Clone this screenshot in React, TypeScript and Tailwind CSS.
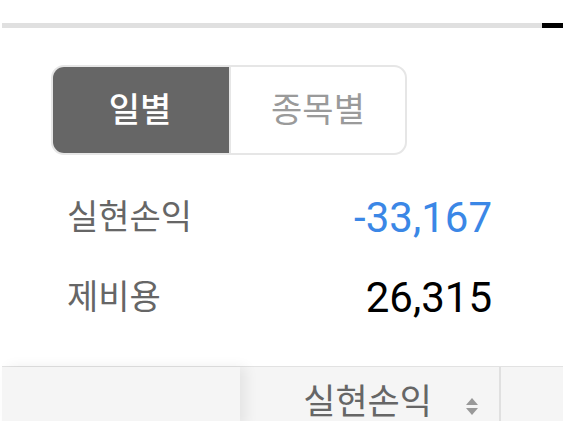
import { useState } from 'react';

const font = { fontFamily: "Roboto, 'Noto Sans CJK KR', sans-serif" };

function SortIcon() {
  return (
    <svg width="14" height="19" viewBox="0 0 14 19" className="text-[#999999]">
      <path d="M7 1 L13 8 H1 Z" fill="currentColor" />
      <path d="M7 18 L13 11 H1 Z" fill="currentColor" />
    </svg>
  );
}

export default function App() {
  const [tab, setTab] = useState<'day' | 'item'>('day');

  const rows = [
    { label: '실현손익', value: '-33,167', color: 'text-[#3b87e6]' },
    { label: '제비용', value: '26,315', color: 'text-black' },
  ];

  return (
    <div className="w-[563px] h-[421px] overflow-hidden bg-white" style={font}>
      {/* Top tab indicator */}
      <div className="pt-[23px] pl-[2px] flex">
        <div className="h-[5px] flex-1 bg-[#e0e0e0]" />
        <div className="h-[5px] w-[21px] bg-black" />
      </div>

      {/* Segmented toggle */}
      <div className="pl-[51px] pt-[37px]">
        <div className="flex w-[356px] h-[90px] rounded-[13px] border-2 border-[#e6e6e6] overflow-hidden">
          <button
            onClick={() => setTab('day')}
            className={`w-[178px] -m-[2px] mr-0 flex items-center justify-center text-[34px] font-medium ${
              tab === 'day' ? 'bg-[#666666] text-white rounded-l-[13px]' : 'text-[#9a9a9a]'
            }`}
          >
            일별
          </button>
          <button
            onClick={() => setTab('item')}
            className={`flex-1 flex items-center justify-center text-[34px] border-l-2 border-[#e6e6e6] ${
              tab === 'item' ? 'bg-[#666666] text-white' : 'text-[#9a9a9a]'
            }`}
          >
            종목별
          </button>
        </div>
      </div>

      {/* Summary */}
      <div className="pl-[67px] pr-[71px] pt-[22px] flex flex-col">
        {rows.map((r) => (
          <div key={r.label} className="h-[80px] flex items-center justify-between">
            <span className="text-[34px] text-[#666666]">{r.label}</span>
            <span className={`text-[42px] ${r.color}`}>{r.value}</span>
          </div>
        ))}
      </div>

      {/* Table header */}
      <div className="mt-[29px] ml-[2px] flex h-[60px] bg-[#f5f5f5] border-t border-[#e2e2e2]">
        <div className="w-[238px] relative z-10 shadow-[6px_0_12px_rgba(0,0,0,0.07)] bg-[#f5f5f5]" />
        <div className="w-[261px] flex items-start justify-end pt-[18px] pr-[20px] gap-[33px] border-r-2 border-[#e0e0e0]">
          <span className="text-[35px] leading-none text-[#666666]">실현손익</span>
          <span className="pt-[12px]">
            <SortIcon />
          </span>
        </div>
        <div className="flex-1" />
      </div>
    </div>
  );
}
